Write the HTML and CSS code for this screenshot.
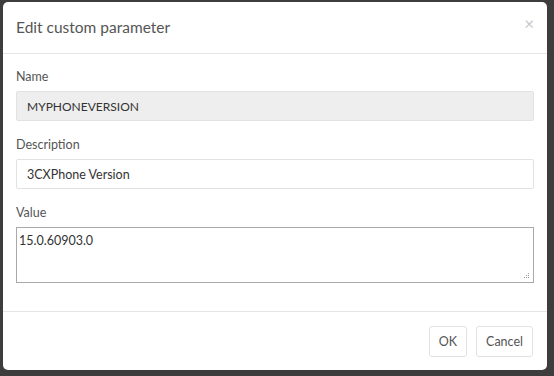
FILE: index.html
```html
<!DOCTYPE html>
<html>
<head lang="en">
    <meta charset="UTF-8">
    <link rel="stylesheet" href="styles.css">
    <title>Edit custom parameter</title>
</head>
<body>
<div class="modal">
    <div class="modal_header">
        <h4 class="modal_title">Edit custom parameter</h4>
        <span class="close">&times;</span>
    </div>
    <div class="modal_body">
        <div class="form_group">
            <label>Name</label>
            <input class="form_control readonly" type="text" value="MYPHONEVERSION" readonly>
        </div>
        <div class="form_group">
            <label>Description</label>
            <input class="form_control" type="text" value="3CXPhone Version">
        </div>
        <div class="form_group">
            <label>Value</label>
            <div class="area_wrap">
                <textarea class="value_area">15.0.60903.0</textarea>
                <svg class="grip" width="6" height="6" viewBox="0 0 6 6">
                    <rect x="4" y="0" width="1" height="1" fill="#999"/>
                    <rect x="2" y="2" width="1" height="1" fill="#999"/>
                    <rect x="4" y="2" width="1" height="1" fill="#999"/>
                    <rect x="0" y="4" width="1" height="1" fill="#999"/>
                    <rect x="2" y="4" width="1" height="1" fill="#999"/>
                    <rect x="4" y="4" width="1" height="1" fill="#999"/>
                </svg>
            </div>
        </div>
    </div>
    <div class="modal_footer">
        <button class="btn">OK</button>
        <button class="btn">Cancel</button>
    </div>
</div>
</body>
</html>
```

FILE: styles.css
```css
* {
    padding: 0;
    margin: 0;
    box-sizing: border-box;
}

body {
    width: 554px;
    height: 376px;
    padding: 2px 7px 6px 3px;
    background: #3d3d3d;
    font-family: Lato, "Noto Sans", sans-serif;
    color: #555;
    overflow: hidden;
}

.modal {
    height: 368px;
    background: #fff;
    border-radius: 5px;
    display: flex;
    flex-direction: column;
}

.modal_header {
    height: 52px;
    padding: 0 13px 0 13px;
    border-bottom: 1px solid #e5e5e5;
    display: flex;
    align-items: center;
    justify-content: space-between;
}

.modal_title {
    font-size: 15.5px;
    font-weight: normal;
    color: #555;
    margin-top: -2px;
}

.close {
    font-size: 17px;
    color: #c4c8cc;
    line-height: 1;
    margin-top: -8px;
}

.modal_body {
    padding: 15px 13px 12px 13px;
    border-bottom: 1px solid #e5e5e5;
}

.form_group {
    margin-bottom: 16px;
}

.form_group label {
    display: block;
    font-size: 12.5px;
    line-height: 16px;
    margin-bottom: 6px;
}

.form_control {
    display: block;
    width: 100%;
    height: 30px;
    padding: 0 10px;
    border: 1px solid #dfe3e6;
    border-radius: 2px;
    font-family: inherit;
    font-size: 12.5px;
    color: #333;
    background: #fff;
}

.form_control.readonly {
    background: #eeeeee;
    font-size: 12px;
}

.area_wrap {
    position: relative;
}

.value_area {
    display: block;
    width: 100%;
    height: 56px;
    padding: 5px 2px;
    border: 1px solid #a9a9a9;
    font-family: inherit;
    font-size: 12.5px;
    color: #333;
    resize: none;
}

.grip {
    position: absolute;
    right: 4px;
    bottom: 4px;
}

.modal_footer {
    flex: 1;
    display: flex;
    justify-content: flex-end;
    align-items: flex-start;
    padding: 14px 14px 0 0;
    gap: 9px;
}

.btn {
    height: 31px;
    padding: 0 9px;
    background: #fff;
    border: 1px solid #dfe3e6;
    border-radius: 3px;
    font-family: inherit;
    font-size: 12.5px;
    color: #555;
}
```
